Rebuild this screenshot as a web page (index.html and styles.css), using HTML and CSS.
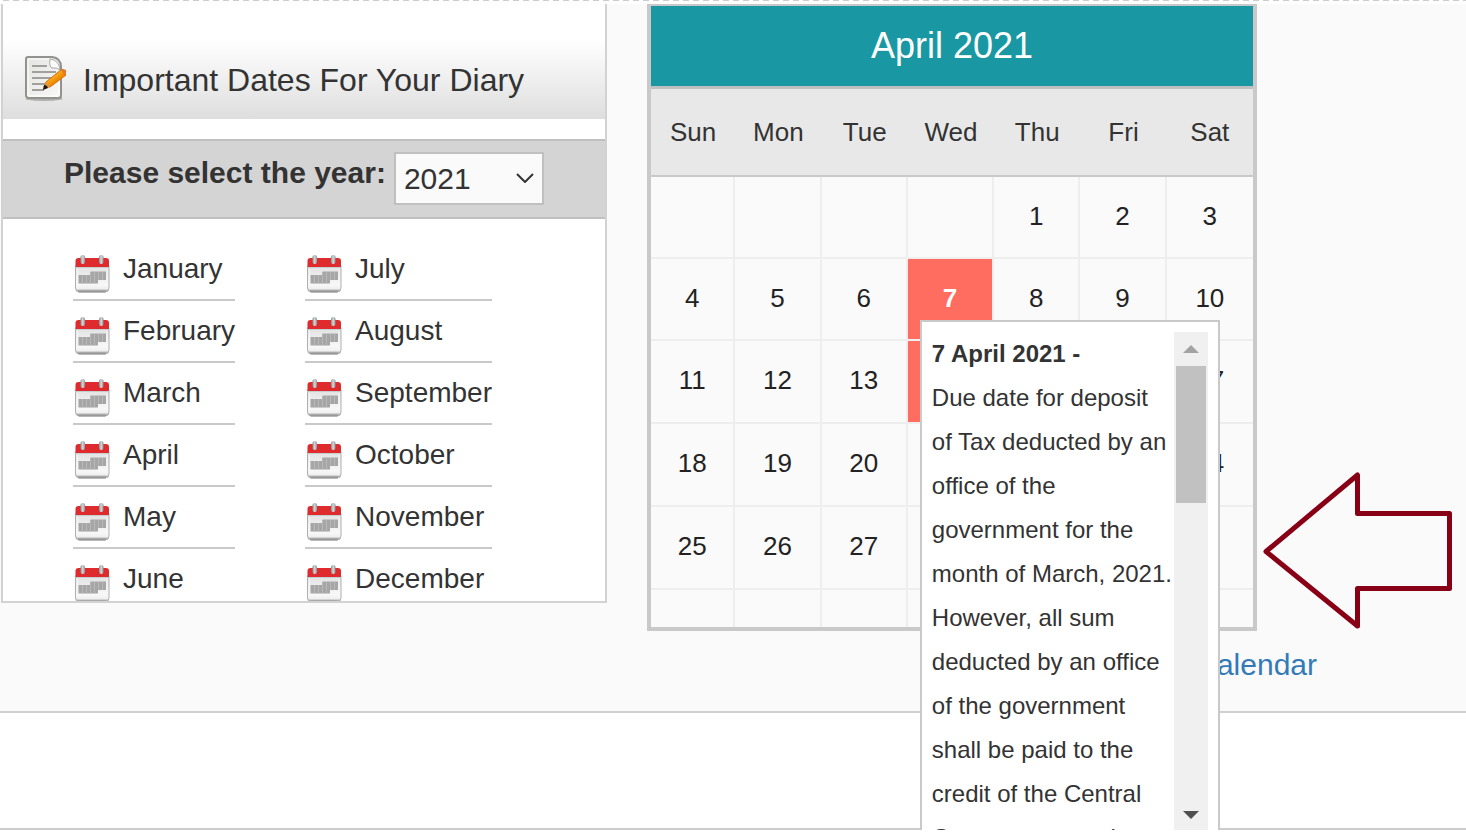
FILE: index.html
```
<!DOCTYPE html>
<html lang="en">
<head>
    <meta charset="UTF-8">
    <meta name="viewport" content="width=device-width, initial-scale=1.0">
    <title>Important Dates For Your Diary</title>
    <link rel="stylesheet" href="styles.css">
</head>
<body>
    <!-- Shared icon for the month links -->
    <svg width="0" height="0" class="icon-defs" aria-hidden="true">
        <defs>
            <linearGradient id="calBody" x1="0" y1="0" x2="0" y2="1">
                <stop offset="0" stop-color="#dedede"/>
                <stop offset="0.75" stop-color="#f8f8f8"/>
                <stop offset="0.88" stop-color="#f0f0f0"/>
                <stop offset="1" stop-color="#8c8c8c"/>
            </linearGradient>
            <linearGradient id="calRing" x1="0" y1="0" x2="1" y2="0">
                <stop offset="0" stop-color="#8b9292"/>
                <stop offset="0.5" stop-color="#d3d8d8"/>
                <stop offset="1" stop-color="#8b9292"/>
            </linearGradient>
            <symbol id="calendarIcon" viewBox="0 0 36 38">
                <rect x="1.500" y="8" width="33.500" height="29" rx="4" fill="url(#calBody)" stroke="#b0b0b0"/>
                <path d="M5 36.500h26" stroke="#999" stroke-width="2" stroke-linecap="round"/>
                <path d="M3.500 14v18M33 14v18" stroke="#f6f6f6"/>
                <path d="M1.500 12V6q0-3 3-3h27.500q3 0 3 3v6z" fill="#df2b2d"/>
                <path d="M1.500 12.500h33.500" stroke="#c4d0d0"/>
                <path d="M16.500 16.500h15.500v8.500h-8v3.500H4.500v-8.500h12z" fill="#a6a6a6"/>
                <path d="M8.500 20v8.500M12.500 20v8.500M16.500 17v11.500M20.500 17v11.500M24.500 17v8M28.500 17v8" stroke="#b8b8b8" fill="none"/>
                <rect x="6.500" y="0" width="4.500" height="9" rx="2" fill="url(#calRing)"/>
                <rect x="25" y="0" width="4.500" height="9" rx="2" fill="url(#calRing)"/>
            </symbol>
        </defs>
    </svg>

    <div class="page">
        <div class="top-rule"></div>

        <div class="dates-section">
            <div class="diary">
                <h2 class="diary-title">
                    <svg class="note-icon" viewBox="0 0 42 46" aria-hidden="true">
                        <defs>
                            <linearGradient id="paper" x1="0" y1="0" x2="1" y2="1">
                                <stop offset="0" stop-color="#e3e4e0"/>
                                <stop offset="1" stop-color="#f9f9f8"/>
                            </linearGradient>
                            <linearGradient id="pencil" x1="0" y1="0" x2="1" y2="1">
                                <stop offset="0.3" stop-color="#ffc22e"/>
                                <stop offset="0.6" stop-color="#f08a00"/>
                            </linearGradient>
                        </defs>
                        <path d="M2 43q18 3 36 0" stroke="#b0b0ae" stroke-width="3" fill="none"/>
                        <path d="M4 2h24q9 1 9 10v28q0 3-3 3H5q-3 0-3-3V4q0-2 2-2z" fill="url(#paper)" stroke="#92938e" stroke-width="2"/>
                        <path d="M4 4h21M4 4v37h31V14" fill="none" stroke="#fff"/>
                        <path d="M26 4q-1 8 2 9 5-1 8 2-1-10-10-11z" fill="#fdfdfd" stroke="#a8a9a5"/>
                        <path d="M8 11h15M8 17h24M8 23h20M8 29h15M8 35h12" stroke="#a0a19d" stroke-width="2"/>
                        <path d="M20 32l2-5L38 14l4 4v2L26 32z" fill="url(#pencil)" stroke="#d46a05"/>
                        <path d="M37 15l2-1 3 1v5l-1 1z" fill="#e07a2a"/>
                        <path d="M19 34l2-6q3 0 5 4z" fill="#d99452"/>
                        <path d="M19 35l1-5q3 0 4 3z" fill="#1d1307"/>
                    </svg>
                    Important Dates For Your Diary
                </h2>

                <div class="year-bar">
                    <label for="yearSelect">Please select the year:</label>
                    <div class="year-select">
                        <select id="yearSelect">
                            <option>2020</option>
                            <option selected>2021</option>
                            <option>2022</option>
                        </select>
                        <svg class="chevron" viewBox="0 0 18 10" aria-hidden="true"><path d="M1 1l8 8 8-8"/></svg>
                    </div>
                </div>

                <div class="months">
                    <ul>
                        <li><a href="#"><svg><use href="#calendarIcon"/></svg>January</a></li>
                        <li><a href="#"><svg><use href="#calendarIcon"/></svg>February</a></li>
                        <li><a href="#"><svg><use href="#calendarIcon"/></svg>March</a></li>
                        <li><a href="#"><svg><use href="#calendarIcon"/></svg>April</a></li>
                        <li><a href="#"><svg><use href="#calendarIcon"/></svg>May</a></li>
                        <li><a href="#"><svg><use href="#calendarIcon"/></svg>June</a></li>
                    </ul>
                    <ul>
                        <li><a href="#"><svg><use href="#calendarIcon"/></svg>July</a></li>
                        <li><a href="#"><svg><use href="#calendarIcon"/></svg>August</a></li>
                        <li><a href="#"><svg><use href="#calendarIcon"/></svg>September</a></li>
                        <li><a href="#"><svg><use href="#calendarIcon"/></svg>October</a></li>
                        <li><a href="#"><svg><use href="#calendarIcon"/></svg>November</a></li>
                        <li><a href="#"><svg><use href="#calendarIcon"/></svg>December</a></li>
                    </ul>
                </div>
            </div>

            <table class="calendar">
                <colgroup>
                    <col class="first-day"><col span="6">
                </colgroup>
                <thead>
                    <tr class="calendar-title"><th colspan="7">April 2021</th></tr>
                    <tr class="calendar-days">
                        <th>Sun</th><th>Mon</th><th>Tue</th><th>Wed</th><th>Thu</th><th>Fri</th><th>Sat</th>
                    </tr>
                </thead>
                <tbody>
                    <tr><td></td><td></td><td></td><td></td><td>1</td><td>2</td><td>3</td></tr>
                    <tr>
                        <td>4</td><td>5</td><td>6</td>
                        <td class="due">7
                            <div class="event-popup">
                                <div class="event-text">
                                    <strong>7 April 2021 -</strong>
                                    <p>Due date for deposit of Tax deducted by an office of the government for the month of March, 2021. However, all sum deducted by an office of the government shall be paid to the credit of the Central Government on the</p>
                                </div>
                                <div class="scrollbar">
                                    <button class="scroll-up" aria-label="Scroll up"></button>
                                    <div class="scroll-thumb"></div>
                                    <button class="scroll-down" aria-label="Scroll down"></button>
                                </div>
                            </div>
                        </td>
                        <td>8</td><td>9</td><td>10</td>
                    </tr>
                    <tr class="tall"><td>11</td><td>12</td><td>13</td><td class="due">14</td><td>15</td><td>16</td><td>17</td></tr>
                    <tr class="tall"><td>18</td><td>19</td><td>20</td><td>21</td><td>22</td><td>23</td><td>24</td></tr>
                    <tr class="tall"><td>25</td><td>26</td><td>27</td><td>28</td><td>29</td><td>30</td><td></td></tr>
                    <tr class="spare"><td></td><td></td><td></td><td></td><td></td><td></td><td></td></tr>
                </tbody>
            </table>

            <div class="calendar-link"><a href="#">View Calendar</a></div>

            <svg class="arrow" viewBox="0 0 190 158" aria-hidden="true">
                <path d="M3 79.500L94.500 3v38.500h92v75h-92V154z"/>
            </svg>
        </div>

        <div class="next-section"></div>
    </div>
</body>
</html>
```
FILE: styles.css
```
* {
    box-sizing: border-box;
}
body {
    font-family: "Liberation Sans", Arial, sans-serif;
    margin: 0;
    color: #333;
    background-color: #fff;
}
.icon-defs {
    position: absolute;
}
.page {
    overflow: hidden;
}
.top-rule {
    height: 4px;
    background: repeating-linear-gradient(to right, #fff 0 3px, #ccc 3px 9px, #fff 9px 10px) top left / 100% 1px no-repeat;
}
.dates-section {
    position: relative;
    display: grid;
    grid-template-columns: 606fr 610fr 169fr;
    column-gap: 40px;
    align-items: start;
    padding: 0 0 26px 1px;
    background-color: #fafafa;
    border-bottom: 2px solid #d0d0d0;
}
.next-section {
    height: 117px;
    border-bottom: 2px solid #ccc;
}

/* Diary panel */
.diary {
    background-color: #fff;
    border: 2px solid #d2d2d2;
    border-top: none;
}
.diary-title {
    display: flex;
    align-items: center;
    gap: 17px;
    height: 79px;
    margin: 36px 0 20px;
    padding: 2px 0 0 21px;
    font-size: 32px;
    font-weight: normal;
    background: linear-gradient(#fff, #dedede);
}
.note-icon {
    width: 42px;
    height: 46px;
    margin-bottom: 6px;
}
.year-bar {
    display: flex;
    gap: 8px;
    padding: 11px 0 12px 61px;
    font-size: 30px;
    background-color: #d4d4d4;
    border-top: 2px solid #c0c0c0;
    border-bottom: 2px solid #c0c0c0;
}
.year-bar label {
    font-weight: bold;
    line-height: 42px;
}
.year-select {
    position: relative;
}
.year-select select {
    display: block;
    width: 150px;
    height: 53px;
    padding: 0 8px;
    font: inherit;
    color: #333;
    background-color: #fafafa;
    border: 2px solid #c0c0c0;
    border-radius: 0;
    appearance: none;
}
.chevron {
    position: absolute;
    right: 10px;
    top: 21px;
    width: 18px;
    height: 10px;
    fill: none;
    stroke: #333;
    stroke-width: 2;
    pointer-events: none;
}
.months {
    display: flex;
    padding-top: 20px;
    overflow: hidden;
}
.months ul {
    list-style: none;
    margin: 0 0 0 70px;
    padding: 0;
}
.months li {
    border-bottom: 2px solid #c9c9c9;
}
.months li:last-child {
    height: 52px;
    border-bottom: none;
}
.months a {
    display: flex;
    gap: 13px;
    padding-left: 1px;
    font-size: 28px;
    line-height: 60px;
    color: #333;
    text-decoration: none;
}
.months svg {
    width: 36px;
    height: 38px;
    margin-top: 16px;
}

/* Calendar */
.calendar {
    width: 100%;
    table-layout: fixed;
    border: 4px solid #c9c9c9;
    border-top-width: 2px;
    border-spacing: 0;
    font-size: 26px;
    text-align: center;
}
.calendar .first-day {
    width: 14%;
}
.calendar th,
.calendar td {
    padding: 0;
    font-weight: normal;
}
.calendar-title th {
    height: 83px;
    font-size: 36px;
    color: #fff;
    background-color: #1998a3;
    border-bottom: 3px solid #c0c0c0;
}
.calendar-days th {
    height: 88px;
    background-color: #e8e8e8;
    border-bottom: 2px solid #c9c9c9;
}
.calendar td {
    height: 82px;
    padding-bottom: 2px;
    color: #222;
    border-right: 2px solid #eee;
    border-bottom: 2px solid #eee;
}
.calendar td:last-child {
    border-right: none;
}
.calendar .tall td {
    height: 83px;
}
.calendar .spare td {
    height: 37px;
    border-bottom: none;
}
.calendar .due {
    position: relative;
    font-weight: bold;
    color: #fff;
    background-color: #ff6c60;
    background-clip: padding-box;
}
.calendar-link {
    grid-column: 2 / -1;
    margin-top: 14px;
    padding-right: 149px;
    font-size: 30px;
    line-height: 40px;
    text-align: right;
}
.calendar-link a {
    color: #337ab7;
    text-decoration: none;
}

/* Event popup, opens under the date */
.event-popup {
    position: absolute;
    left: 12px;
    top: 61px;
    z-index: 2;
    display: flex;
    width: 300px;
    padding: 10px;
    background-color: #fff;
    border: 2px solid #c9c9c9;
}
.event-text {
    width: 242px;
    height: 500px;
    overflow: hidden;
    font-size: 24px;
    font-weight: normal;
    line-height: 44px;
    text-align: left;
    color: #333;
}
.event-text strong {
    display: block;
}
.event-text p {
    margin: 0;
}
.scrollbar {
    display: flex;
    flex-direction: column;
    width: 34px;
    height: 500px;
    background-color: #f0f0f0;
}
.scrollbar button {
    display: flex;
    align-items: center;
    justify-content: center;
    height: 34px;
    padding: 0;
    background: none;
    border: none;
}
.scrollbar button::before {
    content: "";
    border: 8px solid transparent;
}
.scrollbar .scroll-up::before {
    border-top: none;
    border-bottom-color: #a3a3a3;
}
.scrollbar .scroll-down {
    margin-top: auto;
}
.scrollbar .scroll-down::before {
    border-bottom: none;
    border-top-color: #505050;
}
.scroll-thumb {
    height: 137px;
    margin: 0 2px;
    background-color: #c1c1c1;
}

/* Arrow pointing at the calendar */
.arrow {
    position: absolute;
    right: 13px;
    top: 468px;
    width: 190px;
    height: 158px;
    fill: none;
    stroke: #880015;
    stroke-width: 5;
    stroke-linejoin: round;
}
```
